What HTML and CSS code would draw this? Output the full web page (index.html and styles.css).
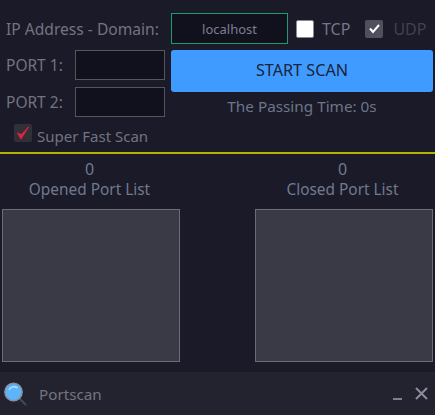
FILE: index.html
```html
<!DOCTYPE html>
<html lang="en">
<head>
<meta charset="utf-8">
<title>Portscan</title>
<link rel="stylesheet" href="styles.css">
</head>
<body>
<div class="app">
  <section class="top">
    <div class="left">
      <div class="label ip-label">IP Address - Domain:</div>
      <div class="port-row"><span class="label">PORT 1:</span><div class="field port"></div></div>
      <div class="port-row"><span class="label">PORT 2:</span><div class="field port"></div></div>
      <div class="fast">
        <span class="fast-box"><svg width="14" height="14" viewBox="0 0 14 14"><path d="M1.5 7 L5 13 L12.5 1 L5.5 8.5 Z" fill="#e0213f" stroke="#e0213f" stroke-width="1"/></svg></span>
        <span class="label fast-text">Super Fast Scan</span>
      </div>
    </div>
    <div class="right">
      <div class="host-row">
        <div class="field host">localhost</div>
        <span class="check white"></span><span class="label tcp">TCP</span>
        <span class="check grey"><svg width="13" height="13" viewBox="0 0 13 13"><path d="M2 6.5 L5 10 L11 3" fill="none" stroke="#fff" stroke-width="2"/></svg></span><span class="label udp">UDP</span>
      </div>
      <div class="start">START SCAN</div>
      <div class="label time">The Passing Time: 0s</div>
    </div>
  </section>
  <section class="lists">
    <div class="col">
      <div class="label count">0</div>
      <div class="label title">Opened Port List</div>
      <div class="listbox"></div>
    </div>
    <div class="col">
      <div class="label count">0</div>
      <div class="label title">Closed Port List</div>
      <div class="listbox"></div>
    </div>
  </section>
  <footer class="bar">
    <svg class="logo" width="24" height="26" viewBox="0 0 24 26">
      <line x1="15" y1="17" x2="22" y2="24" stroke="#3a4a58" stroke-width="2.2"/>
      <circle cx="9.5" cy="11" r="8.7" fill="#5cb4fb" stroke="#8a8f9c" stroke-width="1.4"/>
      <path d="M5 9 A5.5 5.5 0 0 1 13.5 7" fill="none" stroke="#bfe2fd" stroke-width="1.4"/>
    </svg>
    <span class="label app-name">Portscan</span>
    <span class="min"></span>
    <svg class="close" width="13" height="13" viewBox="0 0 13 13"><path d="M1 1 L12 12 M12 1 L1 12" stroke="#8b8c9e" stroke-width="2"/></svg>
  </footer>
</div>
</body>
</html>
```
FILE: styles.css
```css
* { box-sizing: border-box; }
html, body { margin: 0; padding: 0; }
body { width: 435px; height: 415px; overflow: hidden; background: #1a1a28; font-family: "Noto Sans", "Open Sans", sans-serif; }
.app { display: flex; flex-direction: column; height: 415px; }
.label { color: #737482; font-size: 15px; line-height: 20px; white-space: nowrap; }

.top { height: 154px; flex: none; display: flex; border-bottom: 2px solid #b4b400; padding: 13px 2px 0 6px; gap: 6px; }
.left { width: 159px; flex: none; display: flex; flex-direction: column; }
.ip-label { height: 37px; padding-top: 6px; font-size: 15.6px; }
.port-row { display: flex; align-items: center; justify-content: space-between; height: 30px; margin-bottom: 7px; }
.port-row .label { font-size: 15.5px; }
.field { background: #11111e; border: 1px solid #55555c; }
.port { width: 90px; height: 30px; }
.fast { display: flex; align-items: flex-start; gap: 5px; padding-left: 8px; }
.fast-box { width: 18px; height: 18px; background: #303038; border-radius: 2px; display: flex; align-items: center; justify-content: center; }
.fast-text { margin-top: 2px; }

.right { flex: 1; display: flex; flex-direction: column; }
.host-row { display: flex; align-items: center; height: 31px; }
.host { width: 117px; height: 31px; border: 1px solid #1e9a6c; color: #7d7e90; font-size: 13px; display: flex; align-items: center; justify-content: center; }
.check { width: 18px; height: 18px; border-radius: 2px; display: flex; align-items: center; justify-content: center; flex: none; }
.white { background: #fff; border: 1px solid #8a8a96; margin-left: 8px; }
.grey { background: #50505c; margin-left: 15px; }
.tcp { margin-left: 8px; color: #74758a; font-size: 16px; }
.udp { margin-left: 10px; color: #41424f; font-size: 16px; }
.start { margin-top: 6px; height: 42px; padding-bottom: 3px; background: #3f9bff; border-radius: 3px; color: #1a2338; font-size: 16.2px; display: flex; align-items: center; justify-content: center; }
.time { text-align: center; margin-top: 4px; font-size: 15.3px; color: #6f7588; }

.lists { flex: 1; display: flex; justify-content: space-between; padding: 5px 2px 0 2px; }
.col { width: 178px; display: flex; flex-direction: column; align-items: center; }
.count, .title { color: #6f7a90; margin-right: 3px; }
.count { height: 19px; font-size: 16px; }
.title { height: 29px; margin-top: 2px; font-size: 15.4px; }
.listbox { width: 100%; height: 153px; background: #3a3a46; border: 1px solid #6c6c74; }

.bar { height: 43px; flex: none; background: #23232f; display: flex; align-items: center; padding: 0 7px 0 4px; }
.logo { flex: none; }
.app-name { margin-left: 11px; font-size: 15.2px; }
.min { width: 9px; height: 2px; background: #7e7f90; margin-left: auto; margin-top: 10px; }
.close { margin-left: 13px; }
```
